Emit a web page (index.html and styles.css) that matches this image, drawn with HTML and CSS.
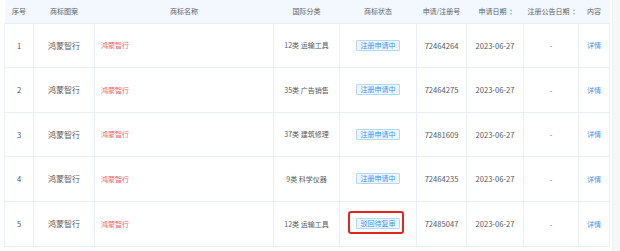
FILE: index.html
```html
<!DOCTYPE html>
<html lang="zh">
<head>
<meta charset="utf-8">
<link rel="stylesheet" href="styles.css">
</head>
<body>
<div class="page">
  <div class="wrap">
    <table class="grid">
      <colgroup>
        <col class="c1"><col class="c2"><col class="c3"><col class="c4"><col class="c5"><col class="c6"><col class="c7"><col class="c8"><col class="c9">
      </colgroup>
      <thead>
        <tr>
          <th>序号</th>
          <th>商标图案</th>
          <th>商标名称</th>
          <th>国际分类</th>
          <th>商标状态</th>
          <th>申请/注册号</th>
          <th>申请日期<span class="sort"><i class="up"></i><i class="down"></i></span></th>
          <th>注册公告日期<span class="sort"><i class="up"></i><i class="down"></i></span></th>
          <th>内容</th>
        </tr>
      </thead>
      <tbody>
        <tr class="short">
          <td class="num">1</td><td class="pic">鸿蒙智行</td><td class="name">鸿蒙智行</td><td>12类 运输工具</td>
          <td><span class="tag">注册申请中</span></td><td class="num">72464264</td><td class="num">2023-06-27</td><td>-</td><td><a class="link">详情</a></td>
        </tr>
        <tr>
          <td class="num">2</td><td class="pic">鸿蒙智行</td><td class="name">鸿蒙智行</td><td>35类 广告销售</td>
          <td><span class="tag">注册申请中</span></td><td class="num">72464275</td><td class="num">2023-06-27</td><td>-</td><td><a class="link">详情</a></td>
        </tr>
        <tr class="short">
          <td class="num">3</td><td class="pic">鸿蒙智行</td><td class="name">鸿蒙智行</td><td>37类 建筑修理</td>
          <td><span class="tag">注册申请中</span></td><td class="num">72481609</td><td class="num">2023-06-27</td><td>-</td><td><a class="link">详情</a></td>
        </tr>
        <tr>
          <td class="num">4</td><td class="pic">鸿蒙智行</td><td class="name">鸿蒙智行</td><td>9类 科学仪器</td>
          <td><span class="tag">注册申请中</span></td><td class="num">72464235</td><td class="num">2023-06-27</td><td>-</td><td><a class="link">详情</a></td>
        </tr>
        <tr>
          <td class="num">5</td><td class="pic">鸿蒙智行</td><td class="name">鸿蒙智行</td><td>12类 运输工具</td>
          <td><span class="mark"><span class="tag">驳回待复审</span></span></td><td class="num">72485047</td><td class="num">2023-06-27</td><td>-</td><td><a class="link">详情</a></td>
        </tr>
      </tbody>
    </table>
  </div>
  <div class="gutter"></div>
</div>
</body>
</html>
```

FILE: styles.css
```css
html, body {
  margin: 0;
  padding: 0;
  background: #ffffff;
}
body {
  font-family: "Noto Sans CJK SC", "Noto Sans", sans-serif;
  font-size: 7px;
  color: #555a60;
}
.page {
  display: flex;
  width: 620px;
  height: 251px;
  overflow: hidden;
}
.wrap {
  padding-left: 4px;
  width: 606px;
}
.gutter {
  width: 8px;
  margin-left: 2px;
  background: #f6f7f8;
  border-left: 1px solid #eef0f2;
}
.grid {
  border-collapse: collapse;
  table-layout: fixed;
  width: 605px;
}
.c1 { width: 29px; }
.c2 { width: 61px; }
.c3 { width: 179px; }
.c4 { width: 66px; }
.c5 { width: 77px; }
.c6 { width: 50px; }
.c7 { width: 57px; }
.c8 { width: 55px; }
.c9 { width: 31px; }
.grid thead tr { height: 23px; }
.grid tbody tr { height: 45px; }
.grid tbody tr.short { height: 44px; }
.grid th {
  background: #f2f8fd;
  padding: 0;
  font-weight: normal;
  color: #60656c;
  text-align: center;
  white-space: nowrap;
  border-bottom: 1px solid #e6eef6;
}
.grid td {
  padding: 0;
  text-align: center;
  white-space: nowrap;
  border: 1px solid #e8eff6;
}
.grid tbody tr:first-child td { border-top: none; }
.grid td.num { font-size: 7.6px; }
.grid td.pic { font-size: 8px; color: #5a5e63; }
.grid td.name {
  text-align: left;
  padding-left: 6px;
  color: #f35e62;
}
.tag {
  display: inline-block;
  line-height: 9px;
  padding: 0 3.5px;
  color: #3c95ef;
  background: #edf6ff;
  border: 1px solid #b6d9fb;
  border-radius: 1px;
}
.mark {
  position: relative;
  display: inline-block;
}
.mark::after {
  content: "";
  position: absolute;
  left: -8px;
  right: -4px;
  top: -7px;
  bottom: -5px;
  border: 2px solid #e3241f;
  border-radius: 3px;
}
.link { color: #3c95ef; }
.sort {
  display: inline-flex;
  flex-direction: column;
  gap: 2px;
  margin-left: 3px;
  vertical-align: middle;
}
.sort i {
  display: block;
  width: 0;
  height: 0;
  border-left: 1.5px solid transparent;
  border-right: 1.5px solid transparent;
}
.sort .up { border-bottom: 2px solid #a9aeb5; }
.sort .down { border-top: 2px solid #a9aeb5; }
```
